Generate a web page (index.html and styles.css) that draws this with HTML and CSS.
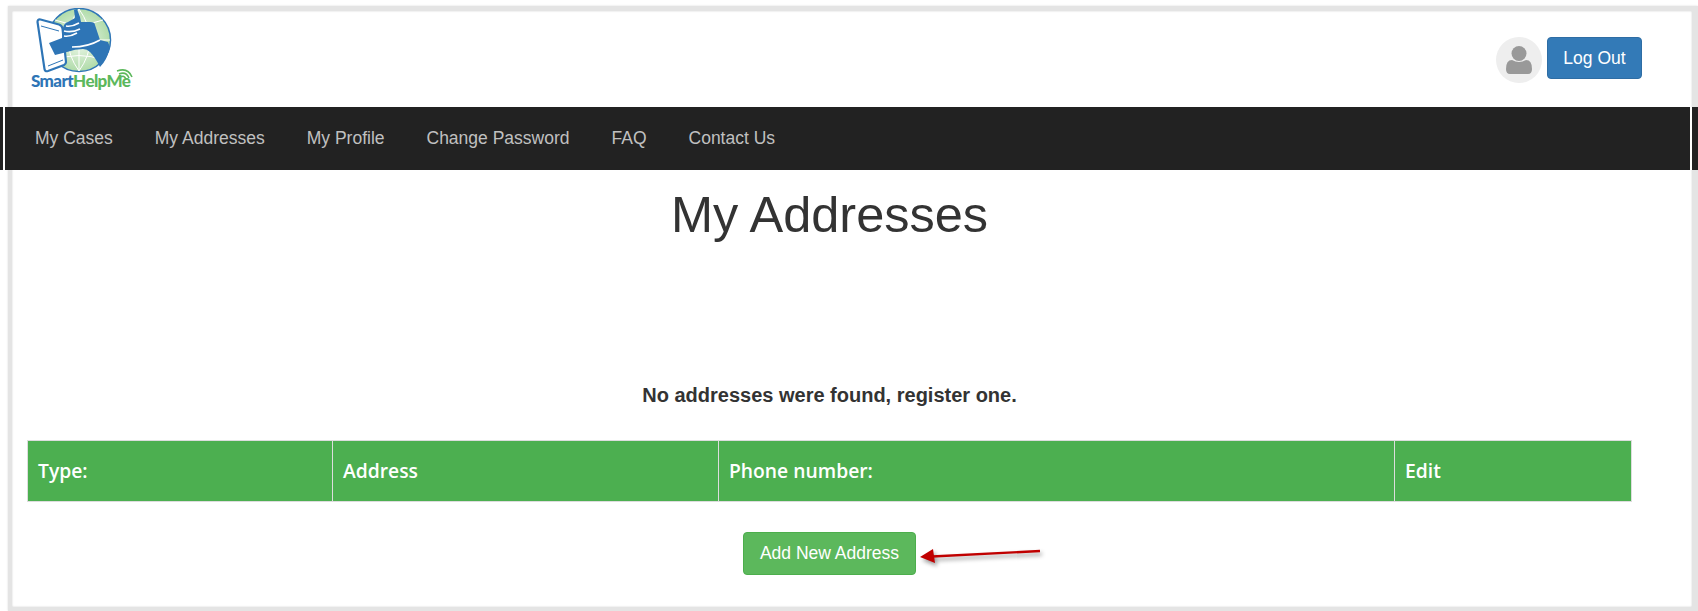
FILE: index.html
```html
<!DOCTYPE html>
<html lang="en">
<head>
  <meta charset="UTF-8" />
  <meta name="viewport" content="width=device-width, initial-scale=1.0" />
  <title>My Addresses</title>
  <link rel="stylesheet" href="styles.css">
</head>
<body>
  <div class="frame">
    <header class="top">
      <svg class="logo" width="112" height="88" viewBox="30 8 112 88">
        <defs>
          <radialGradient id="globe" cx="50%" cy="50%" r="55%">
            <stop offset="0" stop-color="#f2faef"/>
            <stop offset="1" stop-color="#a9d8a2"/>
          </radialGradient>
        </defs>
        <circle cx="79" cy="40" r="31.500" fill="url(#globe)" stroke="#2e75b6" stroke-width="1.500"/>
        <path d="M79 9v62M48 40h62M55 20q24 9 48 0M55 60q24-9 48 0M79 9q-22 31 0 62M79 9q22 31 0 62" fill="none" stroke="#fff" stroke-width="1"/>
        <path d="M37.500 22q0-3 3-2.500L59 24.500q3 1 3.500 4L66 62q0 2-2 3L48 71q-3 1-3.500-2z" fill="#fff" stroke="#2e75b6" stroke-width="2.200"/>
        <path d="M41 26l18 5M48 66l15-6" fill="none" stroke="#2e75b6" stroke-width="1"/>
        <path d="M49 43l13-5 1-10q1-5 5-6l7-4-1-8 3-1 3 8 1 5h9q5 0 5 3l5 15 8 2q3 7 1 8-2 10-9 17-5-10-10-15-3-3-7-3-8 0-16 3L55 55z" fill="#2e75b6"/>
        <path d="M66 26q6 1 13-3M64 31q8 2 16-2M64 36q6 1 13-3M72 47q16 0 28-7" fill="none" stroke="#fff" stroke-width="1.600"/>
        <text class="logo-blue" x="31" y="87">Smart<tspan class="logo-green">HelpMe</tspan></text>
        <path d="M117 71q11-4 15 6M119 74q7-3 10 4M121 77q3-2 5 2" fill="none" stroke="#5cb85c" stroke-width="1.500"/>
      </svg>
      <div class="account">
        <span class="avatar">
          <svg width="28" height="30" viewBox="0 0 28 30">
            <circle cx="14" cy="8.500" r="7.500" fill="#999"/>
            <path d="M1 24q0-9 6-9 7 4 14 0 6 0 6 9 0 5-4 5H5q-4 0-4-5z" fill="#999"/>
          </svg>
        </span>
        <a class="btn btn-blue" href="#">Log Out</a>
      </div>
    </header>

    <nav class="navbar">
      <ul class="nav-links">
        <li><a href="#">My Cases</a></li>
        <li><a href="#">My Addresses</a></li>
        <li><a href="#">My Profile</a></li>
        <li><a href="#">Change Password</a></li>
        <li><a href="#">FAQ</a></li>
        <li><a href="#">Contact Us</a></li>
      </ul>
    </nav>

    <main class="content">
      <h1>My Addresses</h1>
      <p class="empty">No addresses were found, register one.</p>
      <table class="addresses">
        <thead>
          <tr>
            <th class="col-type">Type:</th>
            <th class="col-address">Address</th>
            <th class="col-phone">Phone number:</th>
            <th>Edit</th>
          </tr>
        </thead>
      </table>
      <div class="actions">
        <a class="btn btn-green" href="#">Add New Address</a>
        <svg class="arrow" width="132" height="26" viewBox="0 0 132 26">
          <path d="M14 9.500L122 4" stroke="#c00000" stroke-width="2.400" fill="none"/>
          <path d="M2 10l13-8 1 7 1 7z" fill="#c00000"/>
        </svg>
      </div>
    </main>
  </div>
</body>
</html>
```

FILE: styles.css
```css
* {
  box-sizing: border-box;
}

body {
  margin: 0;
  height: 611px;
  overflow: hidden;
  background: #fff;
  font-family: "Liberation Sans", Arial, sans-serif;
  color: #333;
}

a {
  text-decoration: none;
}

.frame {
  height: 605px;
  margin: 6px 0 0 8px;
  border: solid #e4e4e4;
  border-width: 5px 6px 4px 4px;
  box-shadow: inset 0 0 2px #ccc, 0 0 2px #ddd;
}

.top {
  display: flex;
  justify-content: space-between;
  align-items: flex-start;
  height: 96px;
  padding: 0 50px 0 18px;
}

.logo {
  display: block;
  margin-top: -3px;
}

.logo-blue {
  font-family: "Lato", sans-serif;
  font-size: 17px;
  font-weight: 900;
  fill: #2e75b6;
  letter-spacing: -.6px;
}

.logo-green {
  fill: #5cb85c;
}

.account {
  display: flex;
  gap: 5px;
  margin-top: 26px;
}

.avatar {
  display: flex;
  align-items: center;
  justify-content: center;
  width: 46px;
  height: 46px;
  border-radius: 50%;
  background: #eee;
}

.btn {
  display: inline-block;
  font-size: 17.500px;
  color: #fff;
  border-radius: 4px;
  border: 1px solid;
  text-align: center;
}

.btn-blue {
  width: 95px;
  height: 42px;
  line-height: 40px;
  background: #337ab7;
  border-color: #2e6da4;
}

.btn-green {
  width: 173px;
  height: 43px;
  line-height: 41px;
  background: #5cb85c;
  border-color: #4cae4c;
}

.navbar {
  height: 63px;
  margin: 0 -6px 0 -12px;
  padding: 0 6px 0 3px;
  background: #222;
}

.nav-links {
  display: flex;
  height: 100%;
  margin: 0;
  padding: 0 0 0 9px;
  list-style: none;
  background: #222;
  border: solid #fff;
  border-width: 0 2px;
}

.nav-links a {
  display: block;
  padding: 0 21px;
  line-height: 62px;
  font-size: 17.500px;
  color: #c0c0c0;
}

.content {
  width: 1620px;
  padding-left: 15px;
}

h1 {
  margin: 20px 0 0;
  height: 50px;
  text-align: center;
  font-size: 50.500px;
  font-weight: 400;
  line-height: 50px;
}

.empty {
  margin: 145px 0 0;
  height: 21px;
  text-align: center;
  font-size: 20px;
  font-weight: 700;
  line-height: 21px;
}

.addresses {
  width: 1605px;
  height: 62px;
  margin-top: 34px;
  border-collapse: collapse;
  table-layout: fixed;
  background: #4caf50;
  color: #fff;
}

.addresses th {
  border: 1px solid #ddd;
  padding: 0 10px 2px;
  text-align: left;
  font-family: "Open Sans", sans-serif;
  font-size: 19.300px;
  font-weight: 600;
}

.col-type {
  width: 305px;
}

.col-address {
  width: 386px;
}

.col-phone {
  width: 676px;
}

.actions {
  position: relative;
  margin-top: 30px;
  text-align: center;
}

.actions .btn {
  vertical-align: top;
}

.arrow {
  position: absolute;
  left: 891px;
  top: 15px;
  filter: drop-shadow(2px 3px 2px rgba(0, 0, 0, .4));
}
```
